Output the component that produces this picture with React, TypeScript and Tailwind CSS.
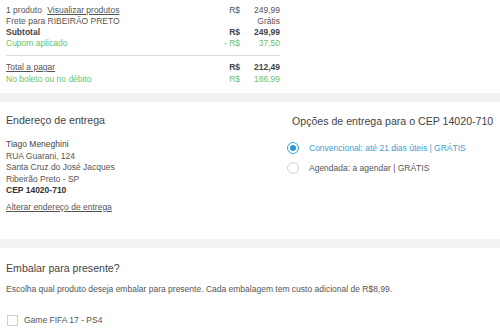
import React from "react";

const font = { fontFamily: '"Liberation Sans", Arial, sans-serif' };

function Row({
  label,
  cur,
  value,
  className = "",
}: {
  label: React.ReactNode;
  cur?: string;
  value: string;
  className?: string;
}) {
  return (
    <div className={`flex h-[11px] items-center leading-[11px] ${className}`}>
      <div className="flex-1">{label}</div>
      <div className="w-[20px] text-right">{cur}</div>
      <div className="w-[40px] text-right">{value}</div>
    </div>
  );
}

function Radio({ checked }: { checked?: boolean }) {
  return (
    <span
      className={`flex h-[12px] w-[12px] items-center justify-center rounded-full border ${
        checked ? "border-[#3a9fd1]" : "border-[#d0d0d0]"
      }`}
    >
      {checked && <span className="h-[6px] w-[6px] rounded-full bg-[#2b95cf]" />}
    </span>
  );
}

export default function App() {
  return (
    <div className="h-[331px] w-[500px] overflow-hidden bg-white text-[8.5px] text-[#555]" style={font}>
      {/* resumo */}
      <div className="w-[280px] pl-[6px] pt-[5px]">
        <Row
          label={
            <span>
              1 produto <span className="ml-[3px] underline">Visualizar produtos</span>
            </span>
          }
          cur="R$"
          value="249,99"
        />
        <Row label="Frete para RIBEIRÃO PRETO" value="Grátis" />
        <Row label="Subtotal" cur="R$" value="249,99" className="font-bold text-[#444]" />
        <Row label="Cupom aplicado" cur="- R$" value="37,50" className="text-[#6cbf6a]" />
        <div className="my-[6px] h-px bg-[#dcdcdc]" />
        <Row
          label={<span className="underline">Total a pagar</span>}
          cur="R$"
          value="212,49"
          className="mt-[1px] [&>div:not(:first-child)]:font-bold [&>div:not(:first-child)]:text-[#444]"
        />
        <Row label="No boleto ou no débito" cur="R$" value="186,99" className="mt-[1px] text-[#6cbf6a]" />
      </div>

      <div className="mt-[8px] h-[9px] bg-[#f2f2f2]" />

      {/* endereço e opções */}
      <div className="flex h-[137px]">
        <div className="w-[287px] pl-[6px]">
          <div className="mt-[11px] text-[10.6px] leading-[14px] text-[#444]">Endereço de entrega</div>
          <div className="mt-[12px] leading-[11.6px]">
            <div className="text-[#444]">Tiago Meneghini</div>
            <div>RUA Guarani, 124</div>
            <div>Santa Cruz do José Jacques</div>
            <div>Ribeirão Preto - SP</div>
            <div className="font-bold text-[#333]">CEP 14020-710</div>
          </div>
          <div className="mt-[5px] leading-[11px] underline">Alterar endereço de entrega</div>
        </div>
        <div className="flex-1">
          <div className="mt-[12px] pl-[5px] text-[10.6px] leading-[14px] text-[#444]">
            Opções de entrega para o CEP 14020-710
          </div>
          <div className="mt-[14px] flex h-[12px] items-center gap-[10px] text-[#3a9fd1]">
            <Radio checked />
            <span>Convencional: até 21 dias úteis | GRÁTIS</span>
          </div>
          <div className="mt-[8px] flex h-[12px] items-center gap-[10px]">
            <Radio />
            <span>Agendada: a agendar | GRÁTIS</span>
          </div>
        </div>
      </div>

      <div className="h-[9px] bg-[#f2f2f2]" />

      {/* presente */}
      <div className="pl-[6px]">
        <div className="mt-[13px] text-[10.6px] leading-[14px] text-[#444]">Embalar para presente?</div>
        <div className="mt-[9px] leading-[11px]">
          Escolha qual produto deseja embalar para presente. Cada embalagem tem custo adicional de R$8,99.
        </div>
        <div className="mt-[19px] flex items-center gap-[6px]">
          <span className="ml-[1px] h-[11px] w-[11px] border border-[#cfcfcf] bg-white" />
          <span>Game FIFA 17 - PS4</span>
        </div>
      </div>
    </div>
  );
}
